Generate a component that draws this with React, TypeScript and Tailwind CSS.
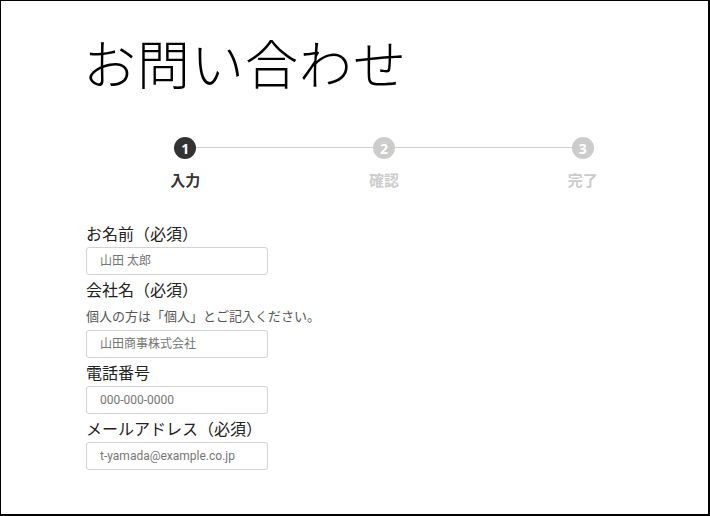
import React from 'react';

const jp = "font-['Noto_Sans_CJK_JP','Noto_Sans',sans-serif]";

const steps = [
  { no: 1, label: '入力', active: true },
  { no: 2, label: '確認', active: false },
  { no: 3, label: '完了', active: false },
];

const Field: React.FC<{ label: string; placeholder: string; help?: string }> = ({
  label,
  placeholder,
  help,
}) => (
  <div className="flex flex-col">
    <label className="text-[16px] leading-[24px] text-[#222] mb-[2px]">{label}</label>
    {help && (
      <p className="text-[13px] leading-[20px] text-[#555] mt-[3px] mb-[4px]">{help}</p>
    )}
    <input
      className="w-[182px] h-[28px] border border-[#d3d3d3] rounded-[3px] px-[13px] text-[12px] font-['Roboto','Noto_Sans_CJK_JP',sans-serif] placeholder:text-[#757575] outline-none"
      placeholder={placeholder}
    />
  </div>
);

export default function App() {
  return (
    <div
      className={`w-[710px] h-[516px] bg-white border-t border-l border-r-2 border-b-2 border-black overflow-hidden ${jp}`}
    >
      <div className="pl-[85px] pt-[31px] w-[681px]">
        <h1 className="text-[53px] leading-[60px] font-light text-black tracking-[1px] -ml-[3px]">
          お問い合わせ
        </h1>

        <div className="relative grid grid-cols-3 mt-[45px]">
          <div className="absolute top-[10px] left-[16.66%] right-[16.66%] h-px bg-[#cfcfcf]" />
          {steps.map((s) => (
            <div key={s.no} className="relative flex flex-col items-center">
              <div
                className={`w-[22px] h-[22px] rounded-full flex items-center justify-center text-white text-[14px] font-bold font-['Open_Sans',sans-serif] ${
                  s.active ? 'bg-[#333]' : 'bg-[#cccccc]'
                }`}
              >
                {s.no}
              </div>
              <div
                className={`mt-[11px] text-[15px] leading-[20px] font-bold ${
                  s.active ? 'text-[#333]' : 'text-[#cccccc]'
                }`}
              >
                {s.label}
              </div>
            </div>
          ))}
        </div>

        <div className="mt-[31px] flex flex-col gap-[2px]">
          <Field label="お名前（必須）" placeholder="山田 太郎" />
          <Field
            label="会社名（必須）"
            help="個人の方は「個人」とご記入ください。"
            placeholder="山田商事株式会社"
          />
          <Field label="電話番号" placeholder="000-000-0000" />
          <Field label="メールアドレス（必須）" placeholder="t-yamada@example.co.jp" />
        </div>
      </div>
    </div>
  );
}
